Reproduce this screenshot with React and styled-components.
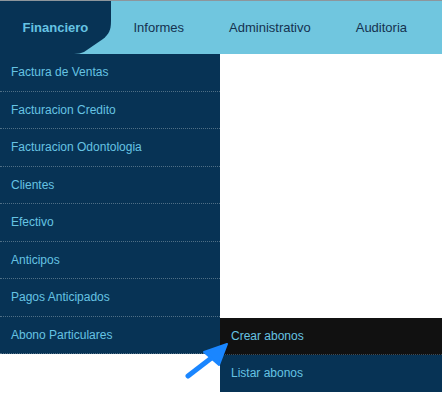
import React from 'react'
import styled, { createGlobalStyle } from 'styled-components'

const menuItems = [
  'Factura de Ventas',
  'Facturacion Credito',
  'Facturacion Odontologia',
  'Clientes',
  'Efectivo',
  'Anticipos',
  'Pagos Anticipados',
  'Abono Particulares'
]

const tabs = ['Financiero', 'Informes', 'Administrativo', 'Auditoria']

const App = () => {
  return (
    <Page>
      <GlobalStyle />
      <NavBar>
        {tabs.map((tab, i) => (
          <Tab key={tab} active={i === 0}>
            {tab}
          </Tab>
        ))}
      </NavBar>
      <Body>
        <SideMenu>
          {menuItems.map((item, i) => (
            <MenuItem key={item}>
              {item}
              {i === menuItems.length - 1 && (
                <SubMenu>
                  <SubItem hover>Crear abonos</SubItem>
                  <SubItem>Listar abonos</SubItem>
                </SubMenu>
              )}
            </MenuItem>
          ))}
        </SideMenu>
        <Pointer viewBox="0 0 50 45" aria-hidden="true">
          <line x1="8" y1="41" x2="34" y2="21" stroke="#1a86ff" strokeWidth="5" strokeLinecap="round" />
          <polygon points="47,9 24,17 39,30" fill="#1a86ff" stroke="#1a86ff" strokeWidth="2" strokeLinejoin="round" />
        </Pointer>
      </Body>
    </Page>
  )
}

const GlobalStyle = createGlobalStyle`
  html, body {
    margin: 0;
    padding: 0;
    background: #ffffff;
  }
  body {
    font-family: "Liberation Sans", Arial, sans-serif;
  }
`

const Page = styled.div`
  width: 442px;
  height: 399px;
  overflow: hidden;
  background: #ffffff;
`

const NavBar = styled.nav`
  display: flex;
  height: 53px;
  background: #70c6df;
  border-top: 1px solid #8d969c;
`

const Tab = styled.div`
  display: flex;
  align-items: center;
  padding: 0 22.5px;
  font-size: 13px;
  font-weight: ${(p) => (p.active ? 700 : 400)};
  color: ${(p) => (p.active ? '#66c3e3' : '#15324f')};
  background: ${(p) => (p.active ? '#073355' : 'transparent')};
  clip-path: ${(p) =>
    p.active
      ? "path('M0 0 H111 V20 C111 29 109 33 103 38 L84 51 Q80 53 74 53 H0 Z')"
      : 'none'};
  width: ${(p) => (p.active ? '66px' : 'auto')};
`

const Body = styled.div`
  position: relative;
  display: flex;
`

const SideMenu = styled.ul`
  list-style: none;
  margin: 0;
  padding: 0;
  width: 220px;
  background: #073355;
`

const MenuItem = styled.li`
  position: relative;
  display: flex;
  align-items: center;
  height: 36.5px;
  padding-left: 11px;
  font-size: 12px;
  color: #66c3e3;
  border-bottom: 1px dotted #4f6f86;
`

const SubMenu = styled.ul`
  position: absolute;
  top: 1px;
  left: 220px;
  width: 222px;
  margin: 0;
  padding: 0;
  list-style: none;
  background: #073355;
`

const SubItem = styled.li`
  display: flex;
  align-items: center;
  height: 36.5px;
  padding-left: 11px;
  font-size: 12px;
  color: #66c3e3;
  background: ${(p) => (p.hover ? '#111111' : '#073355')};
  border-bottom: ${(p) => (p.hover ? '1px dotted #3a4b58' : 'none')};
`

const Pointer = styled.svg`
  position: absolute;
  left: 180px;
  top: 281px;
  width: 50px;
  height: 45px;
`

export default App
